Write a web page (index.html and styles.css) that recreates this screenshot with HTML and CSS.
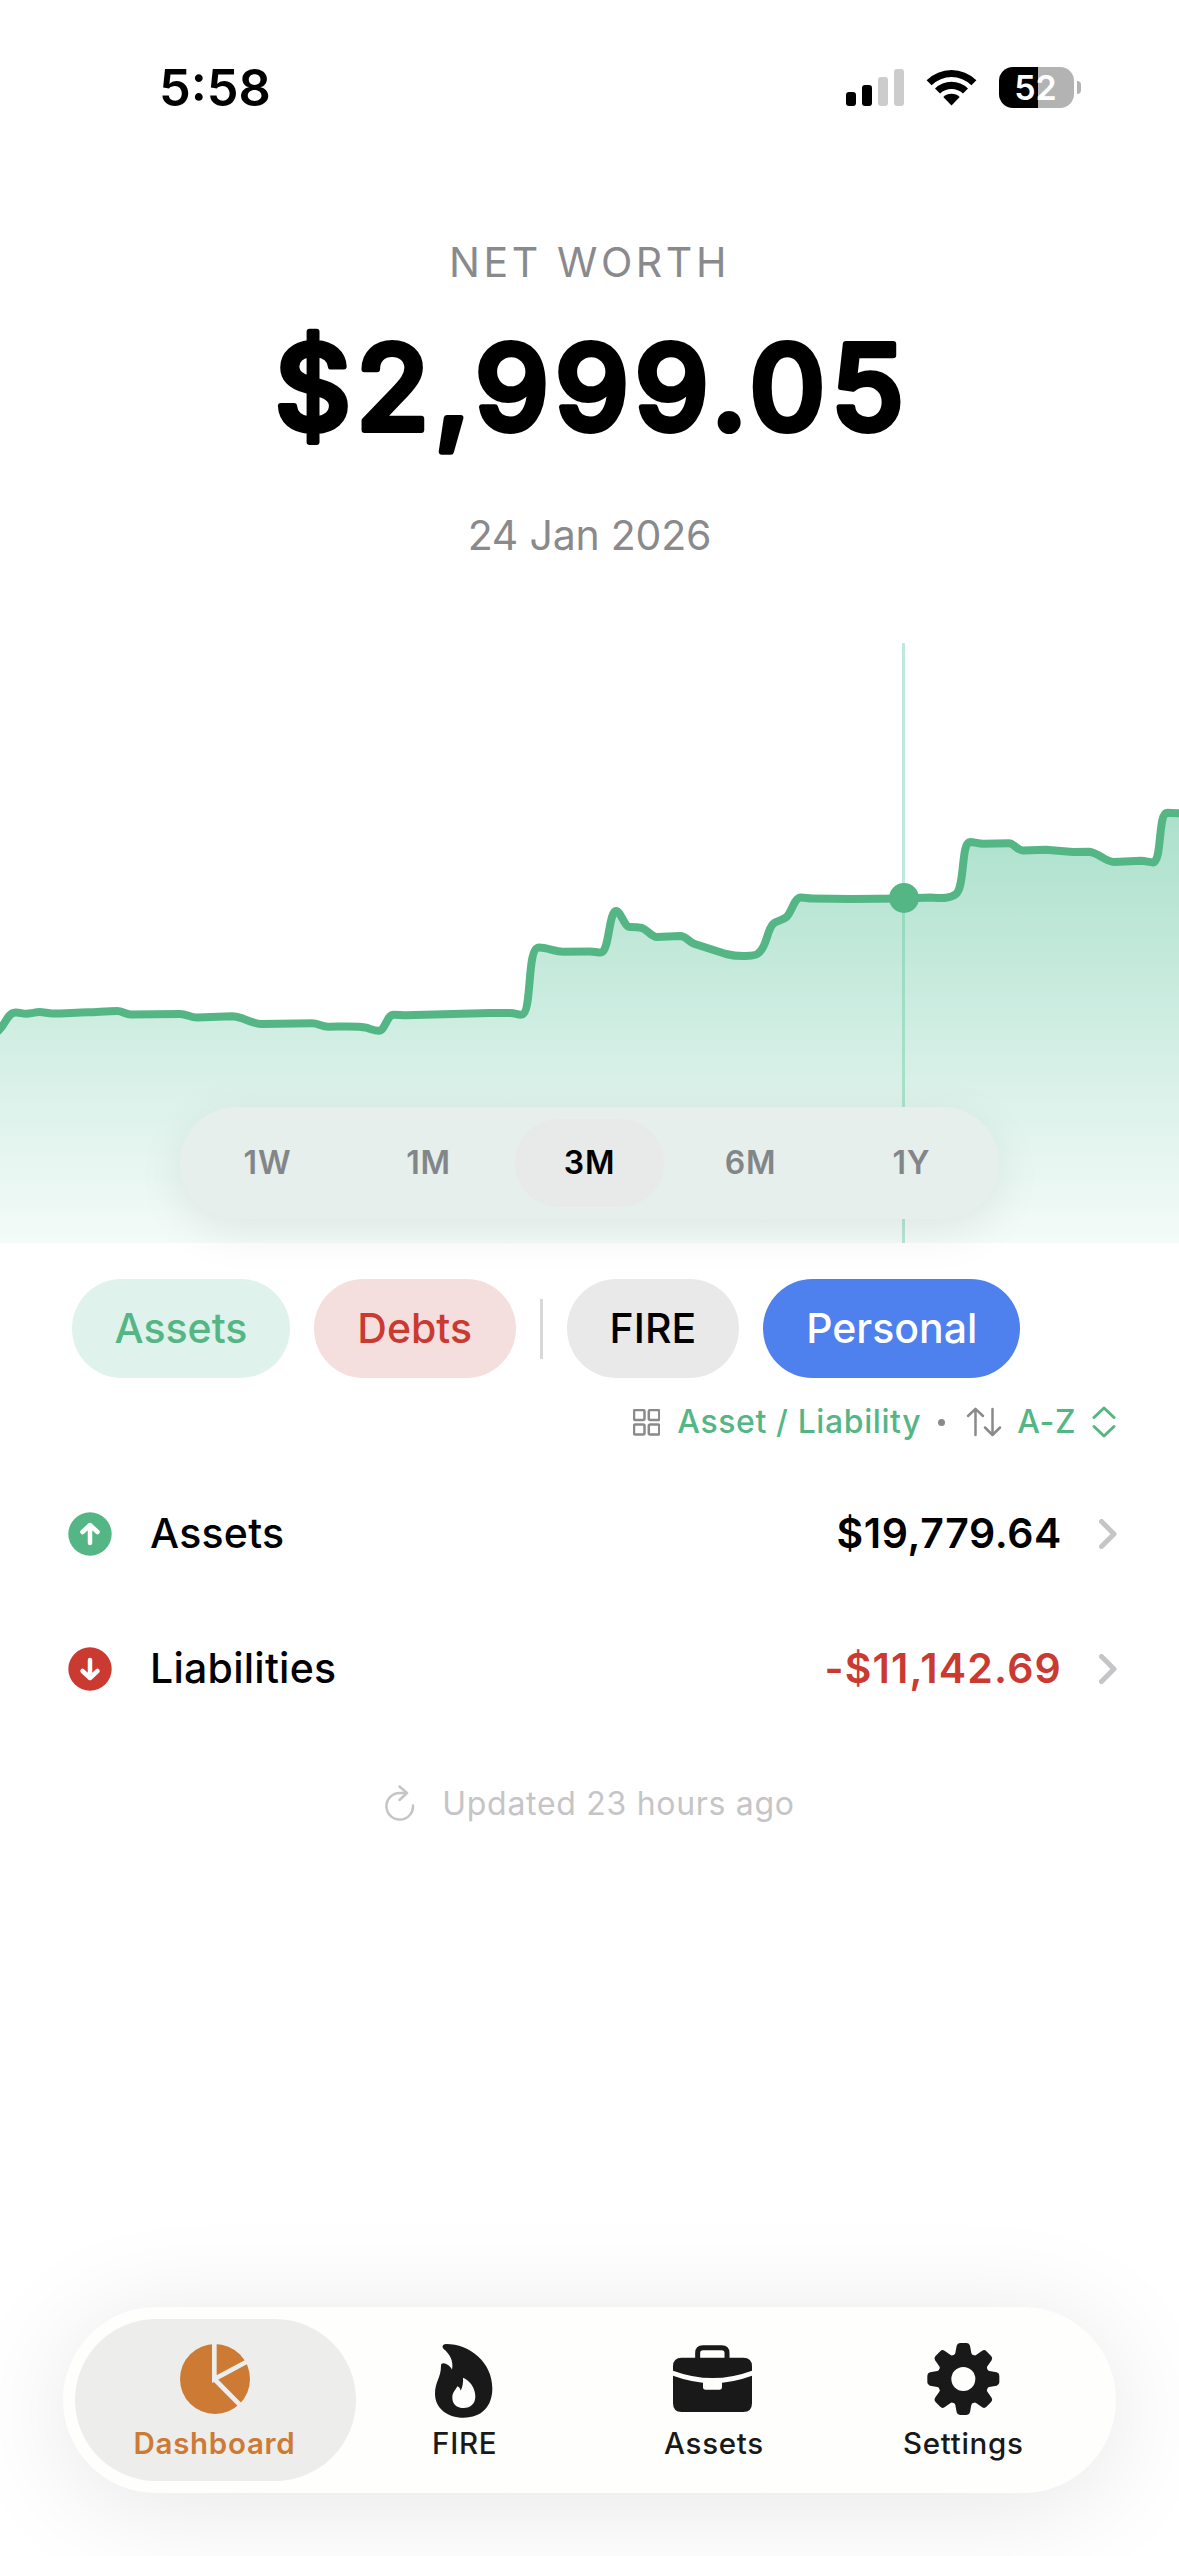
FILE: index.html
```html
<!DOCTYPE html>
<html lang="en">
<head>
    <meta charset="UTF-8">
    <meta name="viewport" content="width=device-width, initial-scale=1.0">
    <title>Net Worth</title>
    <link rel="stylesheet" href="styles.css">
</head>
<body>
    <div class="status-bar">
        <div class="time">5:58</div>
        <div class="status-icons">
            <svg class="signal" viewBox="0 0 58 37">
                <rect x="0" y="23" width="10" height="14" rx="3"/>
                <rect x="16" y="16" width="10" height="21" rx="3"/>
                <rect class="dim" x="32" y="8" width="10" height="29" rx="3"/>
                <rect class="dim" x="48" y="0" width="10" height="37" rx="3"/>
            </svg>
            <svg class="wifi" viewBox="0 0 51 37">
                <path d="M0.6 11.2 A35.5 35.5 0 0 1 50.4 11.2 L45.4 16.2 A28.4 28.4 0 0 0 5.6 16.2 Z"/>
                <path d="M9 19.6 A23.6 23.6 0 0 1 42 19.6 L37 24.6 A16.6 16.6 0 0 0 14 24.6 Z"/>
                <path d="M17.3 28 A11.8 11.8 0 0 1 33.7 28 L25.5 36.6 Z"/>
            </svg>
            <div class="battery">52</div>
            <div class="battery-cap"></div>
        </div>
    </div>

    <div class="header">
        <div class="label">NET WORTH</div>
        <svg class="amount" viewBox="0 0 1179 223">
            <text x="592" y="143">$2,999.05</text>
        </svg>
        <div class="date">24 Jan 2026</div>
    </div>

    <div class="chart">
        <svg viewBox="0 0 1179 600">
            <defs>
                <linearGradient id="fill" gradientUnits="userSpaceOnUse" x1="0" y1="169" x2="0" y2="600">
                    <stop offset="0" stop-color="#abe0cc"/>
                    <stop offset="1" stop-color="#f4fbf9"/>
                </linearGradient>
            </defs>
            <path class="area" d="M0 386 C5 381 8 370 15 369.500 C19 369 22 370.700 26 370.700 C31 370.700 35 369 39.500 369 C44 369 48 370.500 52.500 370.500 C65 370.500 75 369.500 88 369.300 C98 369 107 368 117 368 C123 368 125 371.500 131 371.500 L180 371 C187 371 190 374.500 197 374.500 L232 373.300 C242 373.300 252 381 262 381 L312 380.300 C318 380.300 322 383.700 328 383.700 C340 383.700 358 382.500 366 384.700 C371 386 374 387.700 379 387.700 C385 387.700 387 371.700 393.500 371.700 C398 371.700 402 372.300 406 372.300 L490 370 H510 C515 370 517 371.800 521 371.800 C533 371.800 526 304.500 539 304.500 C547 304.500 555 308.700 563 308.700 L590 308.400 C594 308.400 597 309.600 601 309.600 C609 309.600 609 268 616 268 C621 268 624 284 630 284 C634 284 638 284 642 285 C648 287 651 294 657 294 L680 293 C686 293 689 299 694 300.700 L726 311 C738 314 756 314 759 309.600 C767 303 767 287 773 281 C777 277 782 278 786.500 274 C792 269 794 254.500 801 254.500 C805 254.500 808 255.400 812.500 255.400 L851 256 L903.500 255.400 L931 254.500 C941 255 950 256 956 251 C965 244 961 199 970 199 C975 199 978 200.700 983 200.700 L1009 200.300 C1014 200.300 1017 207.500 1023 207.500 L1046 206.800 L1073 209 L1089 208.800 C1098 209.500 1106 219 1114 219 L1141 217.800 C1146 217.800 1149 219.400 1153 219.400 C1162 219.400 1158 169.700 1167 169.700 C1171 169.700 1175 170 1179 170.500 V600 H0 Z"/>
            <path class="line" d="M-3 389 L0 386 C5 381 8 370 15 369.500 C19 369 22 370.700 26 370.700 C31 370.700 35 369 39.500 369 C44 369 48 370.500 52.500 370.500 C65 370.500 75 369.500 88 369.300 C98 369 107 368 117 368 C123 368 125 371.500 131 371.500 L180 371 C187 371 190 374.500 197 374.500 L232 373.300 C242 373.300 252 381 262 381 L312 380.300 C318 380.300 322 383.700 328 383.700 C340 383.700 358 382.500 366 384.700 C371 386 374 387.700 379 387.700 C385 387.700 387 371.700 393.500 371.700 C398 371.700 402 372.300 406 372.300 L490 370 H510 C515 370 517 371.800 521 371.800 C533 371.800 526 304.500 539 304.500 C547 304.500 555 308.700 563 308.700 L590 308.400 C594 308.400 597 309.600 601 309.600 C609 309.600 609 268 616 268 C621 268 624 284 630 284 C634 284 638 284 642 285 C648 287 651 294 657 294 L680 293 C686 293 689 299 694 300.700 L726 311 C738 314 756 314 759 309.600 C767 303 767 287 773 281 C777 277 782 278 786.500 274 C792 269 794 254.500 801 254.500 C805 254.500 808 255.400 812.500 255.400 L851 256 L903.500 255.400 L931 254.500 C941 255 950 256 956 251 C965 244 961 199 970 199 C975 199 978 200.700 983 200.700 L1009 200.300 C1014 200.300 1017 207.500 1023 207.500 L1046 206.800 L1073 209 L1089 208.800 C1098 209.500 1106 219 1114 219 L1141 217.800 C1146 217.800 1149 219.400 1153 219.400 C1162 219.400 1158 169.700 1167 169.700 C1171 169.700 1175 170 1183 170.500"/>
            <rect class="cursor" x="902" y="0" width="3" height="600"/>
            <circle class="dot" cx="904" cy="255" r="15"/>
        </svg>
        <div class="range">
            <button>1W</button>
            <button>1M</button>
            <button class="active">3M</button>
            <button>6M</button>
            <button>1Y</button>
        </div>
    </div>

    <div class="content">
        <div class="chips">
            <div class="chip green">Assets</div>
            <div class="chip red">Debts</div>
            <div class="divider"></div>
            <div class="chip gray">FIRE</div>
            <div class="chip blue">Personal</div>
        </div>

        <div class="sort">
            <svg class="grid-icon" viewBox="0 0 27 27">
                <rect x="1" y="1" width="10.500" height="10" rx="1.500"/>
                <rect x="15.800" y="1" width="10.500" height="10" rx="1.500"/>
                <rect x="1" y="15.500" width="10.500" height="10" rx="1.500"/>
                <rect x="15.800" y="15.500" width="10.500" height="10" rx="1.500"/>
            </svg>
            <span class="group">Asset / Liability</span>
            <i class="bullet"></i>
            <svg class="arrows" viewBox="0 0 36 30">
                <path d="M9.500 28 V2 M2 9 L9.500 1.800 L17 9 M26.500 2 V27.500 M19 20.500 L26.500 28 L34 20.500"/>
            </svg>
            <span class="order">A-Z</span>
            <svg class="updown" viewBox="0 0 24 32">
                <path d="M2 11.500 L12 2 L22 11.500 M2 20.500 L12 30 L22 20.500"/>
            </svg>
        </div>

        <div class="row">
            <svg class="badge up" viewBox="0 0 44 44">
                <circle cx="22" cy="22" r="21.700"/>
                <path d="M22 31 V13.500 M14.500 20 L22 13 L29.500 20"/>
            </svg>
            <span class="name">Assets</span>
            <span class="value">$19,779.64</span>
            <svg class="chevron" viewBox="0 0 18 30"><path d="M2.500 2.500 L15 15 L2.500 27.500"/></svg>
        </div>
        <div class="row">
            <svg class="badge down" viewBox="0 0 44 44">
                <circle cx="22" cy="22" r="21.700"/>
                <path d="M22 13 V30.500 M14.500 24 L22 31 L29.500 24"/>
            </svg>
            <span class="name">Liabilities</span>
            <span class="value negative">-$11,142.69</span>
            <svg class="chevron" viewBox="0 0 18 30"><path d="M2.500 2.500 L15 15 L2.500 27.500"/></svg>
        </div>

        <div class="updated">
            <svg class="refresh" viewBox="0 0 30 36">
                <path d="M28 20.500 A13.300 13.300 0 1 1 14.800 8 H22 M14.500 1.500 L22 8 L14.500 15"/>
            </svg>
            <span>Updated 23 hours ago</span>
        </div>
    </div>

    <div class="tab-bar">
        <div class="tab active">
            <svg viewBox="0 0 270 270">
                <circle cx="135" cy="132" r="105"/>
                <path class="cut" d="M133 20 V132 L240 75 M133 132 L215 215"/>
            </svg>
            <span>Dashboard</span>
        </div>
        <div class="tab">
            <svg viewBox="0 0 270 270">
                <path fill-rule="evenodd" d="M78 27 C150 27 217 82 217 160 C217 215 185 248 131 248 C80 248 45 218 45 176 C45 140 63 128 63 92 C63 82 73 84 80 88 C88 92 93 98 96 104 C102 78 88 56 71 42 C65 36 68 27 78 27 Z M129 128 C150 136 166 160 166 184 C166 206 152 219 131 219 C110 219 97 206 97 188 C97 172 106 166 112 154 C118 156 120 160 122 167 C128 156 130 142 129 128 Z"/>
            </svg>
            <span>FIRE</span>
        </div>
        <div class="tab">
            <svg class="wide" viewBox="3 0 288 270">
                <path class="handle" d="M98 74 V54 Q98 38 114 38 H170 Q186 38 186 54 V74"/>
                <path d="M24 107 V94 Q24 68 50 68 H235 Q261 68 261 94 V107 Q143 151 24 107 Z"/>
                <path d="M24 122 Q143 166 261 122 V205 Q261 231 235 231 H50 Q24 231 24 205 Z"/>
                <path class="latch" d="M114 138 H171 V156 Q171 164 163 164 H122 Q114 164 114 156 Z"/>
            </svg>
            <span>Assets</span>
        </div>
        <div class="tab">
            <svg viewBox="-4 0 270 270">
                <defs>
                    <path id="tooth" d="M100 64 Q107 60 108 54 L112 32 Q114 24 122 24 H142 Q150 24 152 32 L156 54 Q157 60 164 64 Z"/>
                </defs>
                <circle cx="132" cy="132" r="78"/>
                <use href="#tooth"/>
                <use href="#tooth" transform="rotate(45 132 132)"/>
                <use href="#tooth" transform="rotate(90 132 132)"/>
                <use href="#tooth" transform="rotate(135 132 132)"/>
                <use href="#tooth" transform="rotate(180 132 132)"/>
                <use href="#tooth" transform="rotate(225 132 132)"/>
                <use href="#tooth" transform="rotate(270 132 132)"/>
                <use href="#tooth" transform="rotate(315 132 132)"/>
                <circle class="hole" cx="132" cy="132" r="36"/>
            </svg>
            <span>Settings</span>
        </div>
    </div>
</body>
</html>
```
FILE: styles.css
```css
/* General Styles */
* {
    box-sizing: border-box;
}

body {
    display: flex;
    flex-direction: column;
    width: 1179px;
    height: 2556px;
    margin: 0;
    background: #fff;
    font-family: Inter, 'Liberation Sans', sans-serif;
    color: #000;
    overflow: hidden;
}

svg {
    display: block;
    flex: none;
}

/* Status Bar */
.status-bar {
    display: flex;
    justify-content: space-between;
    align-items: center;
    height: 175px;
    padding: 0 98px 0 159px;
}

.time {
    font-size: 50.500px;
    font-weight: 600;
}

.status-icons {
    display: flex;
    align-items: center;
}

.signal {
    width: 58px;
    height: 37px;
}

.signal .dim {
    fill: #ccc;
}

.wifi {
    width: 51px;
    height: 37px;
    margin: 0 22px;
}

.battery {
    width: 75px;
    height: 41px;
    padding-right: 2px;
    border-radius: 14px;
    background: linear-gradient(90deg, #000 52%, #b3b3b3 52%);
    color: #fff;
    font-size: 34px;
    font-weight: 600;
    line-height: 41px;
    text-align: center;
}

.battery-cap {
    width: 4px;
    height: 13px;
    margin-left: 3px;
    border-radius: 0 4px 4px 0;
    background: #b3b3b3;
}

/* Header */
.header {
    margin-top: 62px;
    text-align: center;
    color: #8a8a8d;
    font-size: 41px;
    line-height: 50px;
}

.label {
    letter-spacing: 3.600px;
}

.date {
    letter-spacing: -0.200px;
}

.amount {
    width: 1179px;
    height: 223px;
}

.amount text {
    fill: #000;
    stroke: #000;
    stroke-width: 6px;
    stroke-linejoin: round;
    font-size: 118px;
    font-weight: 500;
    letter-spacing: 5.500px;
    text-anchor: middle;
}

/* Chart */
.chart {
    position: relative;
    height: 600px;
    margin-top: 83px;
}

.chart svg {
    width: 1179px;
    height: 600px;
}

.area {
    fill: url(#fill);
}

.line {
    fill: none;
    stroke: #55b685;
    stroke-width: 8px;
    stroke-linejoin: round;
}

.cursor {
    fill: #5fc79d;
    opacity: 0.4;
}

.dot {
    fill: #55b685;
}

.range {
    position: absolute;
    left: 180px;
    bottom: 24px;
    display: flex;
    gap: 12px;
    width: 819px;
    height: 112px;
    padding: 12px 13px;
    border-radius: 56px;
    background: #e6efec;
    box-shadow: 0 12px 48px rgba(0, 0, 0, 0.08);
}

.range button {
    flex: 1;
    padding: 0 0 2px;
    border: none;
    border-radius: 44px;
    background: none;
    color: #838689;
    font: 600 32px Inter, 'Liberation Sans', sans-serif;
    letter-spacing: 0.800px;
}

.range .active {
    background: #e7eae8;
    color: #000;
}

/* Content */
.content {
    position: relative;
    margin-top: 36px;
    background: #fff;
}

.chips {
    display: flex;
    align-items: center;
    gap: 24px;
    height: 99px;
    padding-left: 72px;
}

.chip {
    padding: 0 43px;
    border-radius: 50px;
    font-size: 41px;
    font-weight: 500;
    line-height: 99px;
}

.chip.green {
    padding: 0 42.500px;
    background: #dff2eb;
    color: #55b685;
}

.chip.red {
    padding: 0 43.500px;
    background: #f5dfde;
    color: #ca3a31;
}

.chip.gray {
    background: #e9e9e9;
}

.chip.blue {
    background: #4e80ee;
    color: #fff;
}

.divider {
    width: 3px;
    height: 60px;
    background: #d8d8d8;
}

/* Sort Controls */
.sort {
    display: flex;
    align-items: center;
    justify-content: flex-end;
    height: 44px;
    margin-top: 22px;
    padding-right: 63px;
    color: #55b685;
    font-size: 32px;
    font-weight: 500;
    letter-spacing: 0.600px;
}

.sort span {
    margin-top: -1px;
}

.sort path, .sort rect {
    fill: none;
    stroke: #8a8a8d;
    stroke-width: 2.500px;
    stroke-linecap: round;
    stroke-linejoin: round;
}

.grid-icon {
    width: 27px;
    height: 27px;
    margin-right: 17px;
}

.bullet {
    width: 7px;
    height: 7px;
    margin: 0 21px 0 17px;
    border-radius: 50%;
    background: #8a8a8d;
}

.arrows {
    width: 36px;
    height: 30px;
    margin-right: 15px;
}

.updown {
    width: 24px;
    height: 32px;
    margin-left: 16px;
}

.sort .updown path {
    stroke: #55b685;
    stroke-width: 3px;
}

/* Rows */
.row {
    display: flex;
    align-items: center;
    height: 131px;
    padding: 0 62px 0 68px;
    font-size: 41px;
}

.sort + .row {
    margin-top: 24px;
}

.row + .row {
    margin-top: 4px;
}

.badge {
    width: 44px;
    height: 44px;
    margin-right: 38px;
}

.badge path {
    fill: none;
    stroke: #fff;
    stroke-width: 4.500px;
    stroke-linecap: round;
    stroke-linejoin: round;
}

.up {
    fill: #55b685;
}

.down {
    fill: #ca3a31;
}

.name {
    flex: 1;
    margin-top: -1px;
    font-weight: 500;
    letter-spacing: 0.250px;
}

.value {
    margin: -1px 37px 0 0;
    font-weight: 600;
    letter-spacing: 0.600px;
}

.negative {
    color: #ca3a31;
    letter-spacing: 1.200px;
}

.chevron {
    width: 18px;
    height: 30px;
}

.chevron path {
    fill: none;
    stroke: #c5c5c7;
    stroke-width: 5px;
    stroke-linecap: round;
    stroke-linejoin: round;
}

/* Updated */
.updated {
    display: flex;
    align-items: center;
    justify-content: center;
    height: 40px;
    margin-top: 49px;
    padding-left: 1px;
    color: #c5c5c7;
    font-size: 32px;
    letter-spacing: 0.700px;
}

.refresh {
    width: 30px;
    height: 36px;
    margin-right: 27px;
}

.refresh path {
    fill: none;
    stroke: #c5c5c7;
    stroke-width: 2.500px;
    stroke-linecap: round;
    stroke-linejoin: round;
}

/* Tab Bar */
.tab-bar {
    display: flex;
    width: 1053px;
    height: 186px;
    margin: auto 63px 63px;
    padding: 12px 28px;
    border-radius: 93px;
    background: #fefefd;
    box-shadow: 0 12px 110px rgba(0, 0, 0, 0.1);
}

.tab {
    display: flex;
    flex: 1;
    flex-direction: column;
    align-items: center;
    padding-top: 16px;
    border-radius: 81px;
    color: #191919;
    fill: #191919;
    font-size: 29.500px;
    font-weight: 500;
    letter-spacing: 0.700px;
}

.tab svg {
    width: 90px;
    height: 90px;
}

.tab .wide {
    width: 96px;
}

.tab span {
    line-height: 34px;
    margin-top: 1px;
}

.tab.active {
    flex: 0 0 281px;
    margin: 0 -16px;
    padding-right: 2px;
    background: #ededeb;
    color: #cd7a35;
    fill: #cd7a35;
    font-weight: 600;
    letter-spacing: 0.700px;
}

.cut {
    fill: none;
    stroke: #ededeb;
    stroke-width: 14px;
}

.handle {
    fill: none;
    stroke: #191919;
    stroke-width: 15px;
}

.latch, .hole {
    fill: #fefefd;
}
```
